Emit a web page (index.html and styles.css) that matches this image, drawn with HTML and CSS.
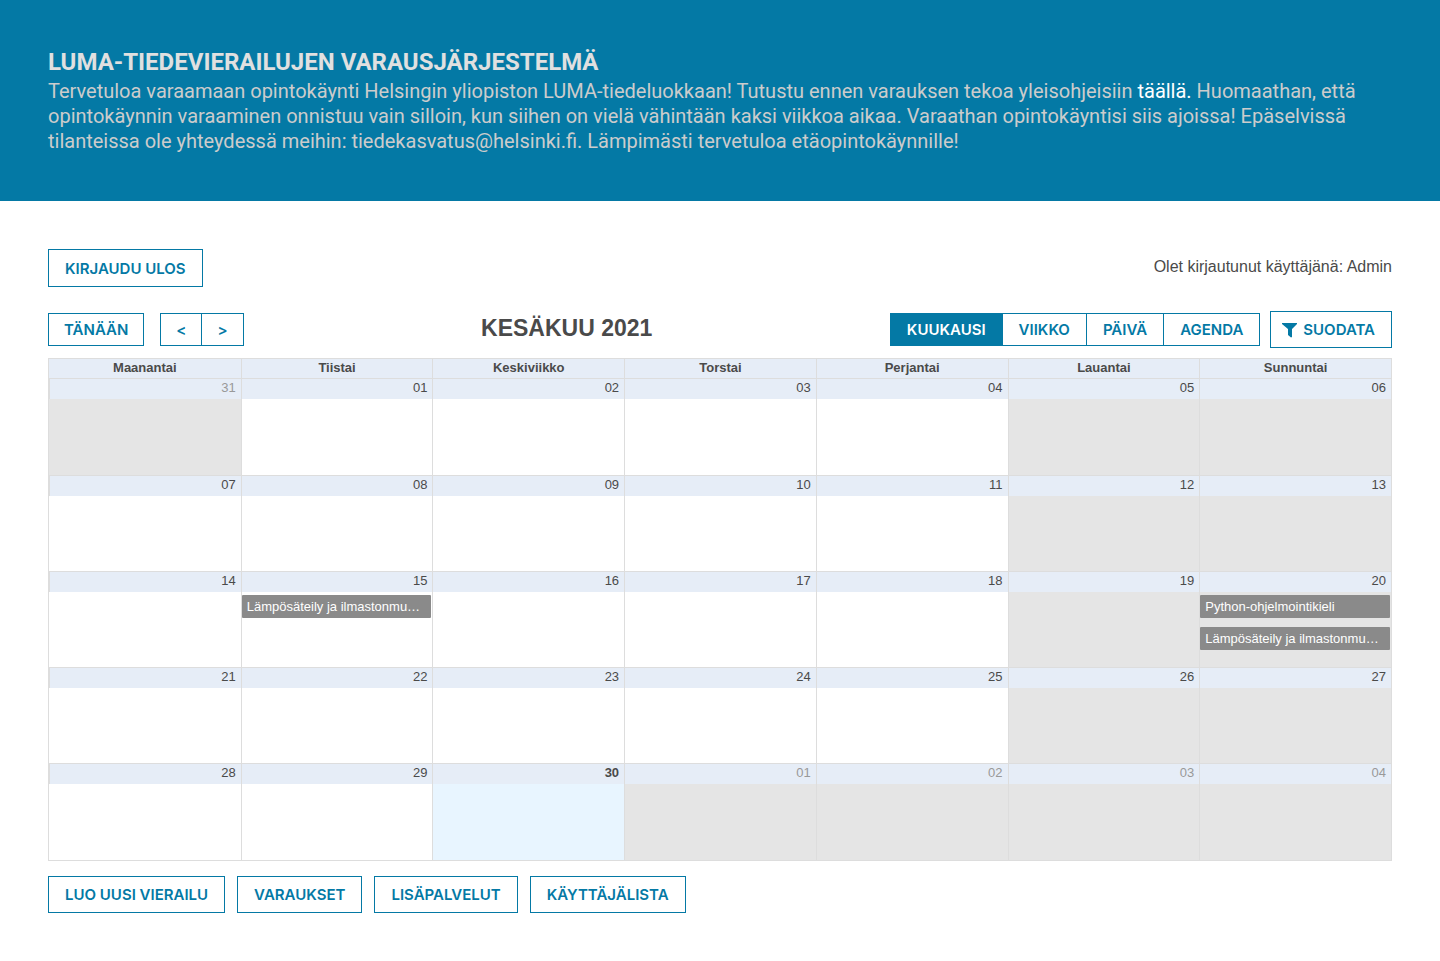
FILE: index.html
```html
<!DOCTYPE html>
<html lang="fi">
<head>
<meta charset="utf-8">
<title>LUMA-tiedevierailujen varausjärjestelmä</title>
<link rel="stylesheet" href="styles.css">
</head>
<body>
<header class="banner">
  <h1 class="banner-title">LUMA-TIEDEVIERAILUJEN VARAUSJÄRJESTELMÄ</h1>
  <p class="banner-text">Tervetuloa varaamaan opintokäynti Helsingin yliopiston LUMA-tiedeluokkaan! Tutustu ennen varauksen tekoa yleisohjeisiin <a class="banner-link" href="#ohjeet">täällä.</a> Huomaathan, että opintokäynnin varaaminen onnistuu vain silloin, kun siihen on vielä vähintään kaksi viikkoa aikaa. Varaathan opintokäyntisi siis ajoissa! Epäselvissä tilanteissa ole yhteydessä meihin: tiedekasvatus@helsinki.fi. Lämpimästi tervetuloa etäopintokäynnille!</p>
</header>
<main class="page">
  <div class="session">
    <button class="btn btn-session" type="button">KIRJAUDU ULOS</button>
    <span class="session-user">Olet kirjautunut käyttäjänä: Admin</span>
  </div>
  <div class="toolbar">
    <div class="nav">
      <button class="btn btn-small" type="button">TÄNÄÄN</button>
      <div class="group">
        <button class="btn btn-small" type="button" aria-label="Edellinen">&lt;</button>
        <button class="btn btn-small" type="button" aria-label="Seuraava">&gt;</button>
      </div>
    </div>
    <h2 class="month">KESÄKUU 2021</h2>
    <div class="views">
      <div class="group">
        <button class="btn btn-small active" type="button">KUUKAUSI</button>
        <button class="btn btn-small" type="button">VIIKKO</button>
        <button class="btn btn-small" type="button">PÄIVÄ</button>
        <button class="btn btn-small" type="button">AGENDA</button>
      </div>
      <button class="btn btn-filter" type="button">
        <svg class="funnel" viewBox="0 0 16 16" aria-hidden="true"><path fill="currentColor" d="M1 1h15v1L11 7v8l-1 .5L7 13V7L1 2z"/></svg>
        SUODATA
      </button>
    </div>
  </div>
  <table class="calendar">
    <thead>
      <tr><th>Maanantai</th><th>Tiistai</th><th>Keskiviikko</th><th>Torstai</th><th>Perjantai</th><th>Lauantai</th><th>Sunnuntai</th></tr>
    </thead>
    <tbody>
      <tr>
        <td class="off muted"><a class="date" href="#d0531">31</a><div class="day"></div></td>
        <td><a class="date" href="#d0601">01</a><div class="day"></div></td>
        <td><a class="date" href="#d0602">02</a><div class="day"></div></td>
        <td><a class="date" href="#d0603">03</a><div class="day"></div></td>
        <td><a class="date" href="#d0604">04</a><div class="day"></div></td>
        <td class="off"><a class="date" href="#d0605">05</a><div class="day"></div></td>
        <td class="off"><a class="date" href="#d0606">06</a><div class="day"></div></td>
      </tr>
      <tr>
        <td><a class="date" href="#d0607">07</a><div class="day"></div></td>
        <td><a class="date" href="#d0608">08</a><div class="day"></div></td>
        <td><a class="date" href="#d0609">09</a><div class="day"></div></td>
        <td><a class="date" href="#d0610">10</a><div class="day"></div></td>
        <td><a class="date" href="#d0611">11</a><div class="day"></div></td>
        <td class="off"><a class="date" href="#d0612">12</a><div class="day"></div></td>
        <td class="off"><a class="date" href="#d0613">13</a><div class="day"></div></td>
      </tr>
      <tr>
        <td><a class="date" href="#d0614">14</a><div class="day"></div></td>
        <td><a class="date" href="#d0615">15</a><div class="day"><button class="event" type="button">Lämpösäteily ja ilmastonmuutos</button></div></td>
        <td><a class="date" href="#d0616">16</a><div class="day"></div></td>
        <td><a class="date" href="#d0617">17</a><div class="day"></div></td>
        <td><a class="date" href="#d0618">18</a><div class="day"></div></td>
        <td class="off"><a class="date" href="#d0619">19</a><div class="day"></div></td>
        <td class="off"><a class="date" href="#d0620">20</a><div class="day"><button class="event" type="button">Python-ohjelmointikieli</button><button class="event" type="button">Lämpösäteily ja ilmastonmuutos</button></div></td>
      </tr>
      <tr>
        <td><a class="date" href="#d0621">21</a><div class="day"></div></td>
        <td><a class="date" href="#d0622">22</a><div class="day"></div></td>
        <td><a class="date" href="#d0623">23</a><div class="day"></div></td>
        <td><a class="date" href="#d0624">24</a><div class="day"></div></td>
        <td><a class="date" href="#d0625">25</a><div class="day"></div></td>
        <td class="off"><a class="date" href="#d0626">26</a><div class="day"></div></td>
        <td class="off"><a class="date" href="#d0627">27</a><div class="day"></div></td>
      </tr>
      <tr>
        <td><a class="date" href="#d0628">28</a><div class="day"></div></td>
        <td><a class="date" href="#d0629">29</a><div class="day"></div></td>
        <td class="today"><a class="date" href="#d0630">30</a><div class="day"></div></td>
        <td class="off muted"><a class="date" href="#d0701">01</a><div class="day"></div></td>
        <td class="off muted"><a class="date" href="#d0702">02</a><div class="day"></div></td>
        <td class="off muted"><a class="date" href="#d0703">03</a><div class="day"></div></td>
        <td class="off muted"><a class="date" href="#d0704">04</a><div class="day"></div></td>
      </tr>
    </tbody>
  </table>
  <div class="actions">
    <button class="btn" type="button">LUO UUSI VIERAILU</button>
    <button class="btn" type="button">VARAUKSET</button>
    <button class="btn" type="button">LISÄPALVELUT</button>
    <button class="btn" type="button">KÄYTTÄJÄLISTA</button>
  </div>
</main>
</body>
</html>
```

FILE: styles.css
```css
* { box-sizing: border-box; }

body {
  margin: 0;
  background: #fff;
  color: #4a4a4a;
  font-family: "Liberation Sans", Arial, sans-serif;
  font-size: 16px;
}

.banner {
  padding: 45px 48px 47px;
  background: #0479a5;
  font-family: Roboto, sans-serif;
}
.banner-title {
  margin: 0;
  color: #e0e0e0;
  font-size: 24px;
  font-weight: 700;
  line-height: 34px;
}
.banner-text {
  margin: 0;
  color: #ccc;
  font-size: 20px;
  line-height: 25px;
}
.banner-link { color: #fff; text-decoration: none; }

.page { padding: 48px; }

.session {
  display: flex;
  justify-content: space-between;
  align-items: center;
}
.session-user { line-height: 24px; margin-bottom: 2px; }

.btn {
  height: 37px;
  padding: 0 16px;
  border: 1px solid #0479a5;
  background: #fff;
  color: #0479a5;
  font-family: Inter, sans-serif;
  font-size: 15px;
  font-weight: 600;
  white-space: nowrap;
}
.btn-session { height: 38px; }
.btn-small { height: 33px; }
.btn.active { background: #0479a5; color: #fff; }
.btn-filter { display: flex; align-items: center; gap: 6px; padding: 0 16px 0 10px; }
.funnel { width: 16px; height: 16px; }

.group { display: flex; }
.group .btn + .btn { margin-left: -1px; }

.toolbar {
  display: flex;
  align-items: center;
  justify-content: space-between;
  margin: 24px 0 10px;
}
.nav { display: flex; gap: 16px; }
.nav .btn { padding: 0 15px; }
.month { margin: 0; padding-bottom: 4px; font-size: 23px; line-height: 32px; }
.views { display: flex; align-items: center; gap: 10px; }

.calendar {
  width: 100%;
  table-layout: fixed;
  border: 1px solid #ddd;
  border-spacing: 0;
  font-size: 13px;
}
.calendar th {
  height: 20px;
  padding: 0;
  border-bottom: 1px solid #ddd;
  background: #e6edf7;
  line-height: 17px;
  vertical-align: top;
}
.calendar th + th { border-left: 1px solid #ddd; }
.calendar td {
  padding: 0;
  border-bottom: 1px solid #ddd;
  vertical-align: top;
}
.calendar tr:last-child td { border-bottom: 0; }
.date {
  display: block;
  height: 20px;
  padding-right: 5px;
  border-left: 1px solid #ddd;
  background: #e6edf7;
  color: #4a4a4a;
  line-height: 18px;
  text-align: right;
  text-decoration: none;
}
.day {
  display: flex;
  flex-direction: column;
  gap: 9px;
  height: 75px;
  padding: 3px 1px 3px 0;
}
tr:first-child .day,
tr:last-child .day { height: 76px; }
td + td .day { border-left: 1px solid #ddd; }
.off .day { background: #e5e5e5; }
.muted .date { color: #999; }
.today .date { font-weight: 700; }
.today .day { background: #e8f5ff; }
.event {
  height: 23px;
  padding: 0 5px;
  border: 0;
  border-radius: 1px;
  background: #8a8a8a;
  color: #fff;
  font-family: inherit;
  font-size: 13px;
  line-height: 22px;
  text-align: left;
  overflow: hidden;
  text-overflow: ellipsis;
  white-space: nowrap;
}

.actions { display: flex; gap: 12px; margin-top: 15px; }
```
